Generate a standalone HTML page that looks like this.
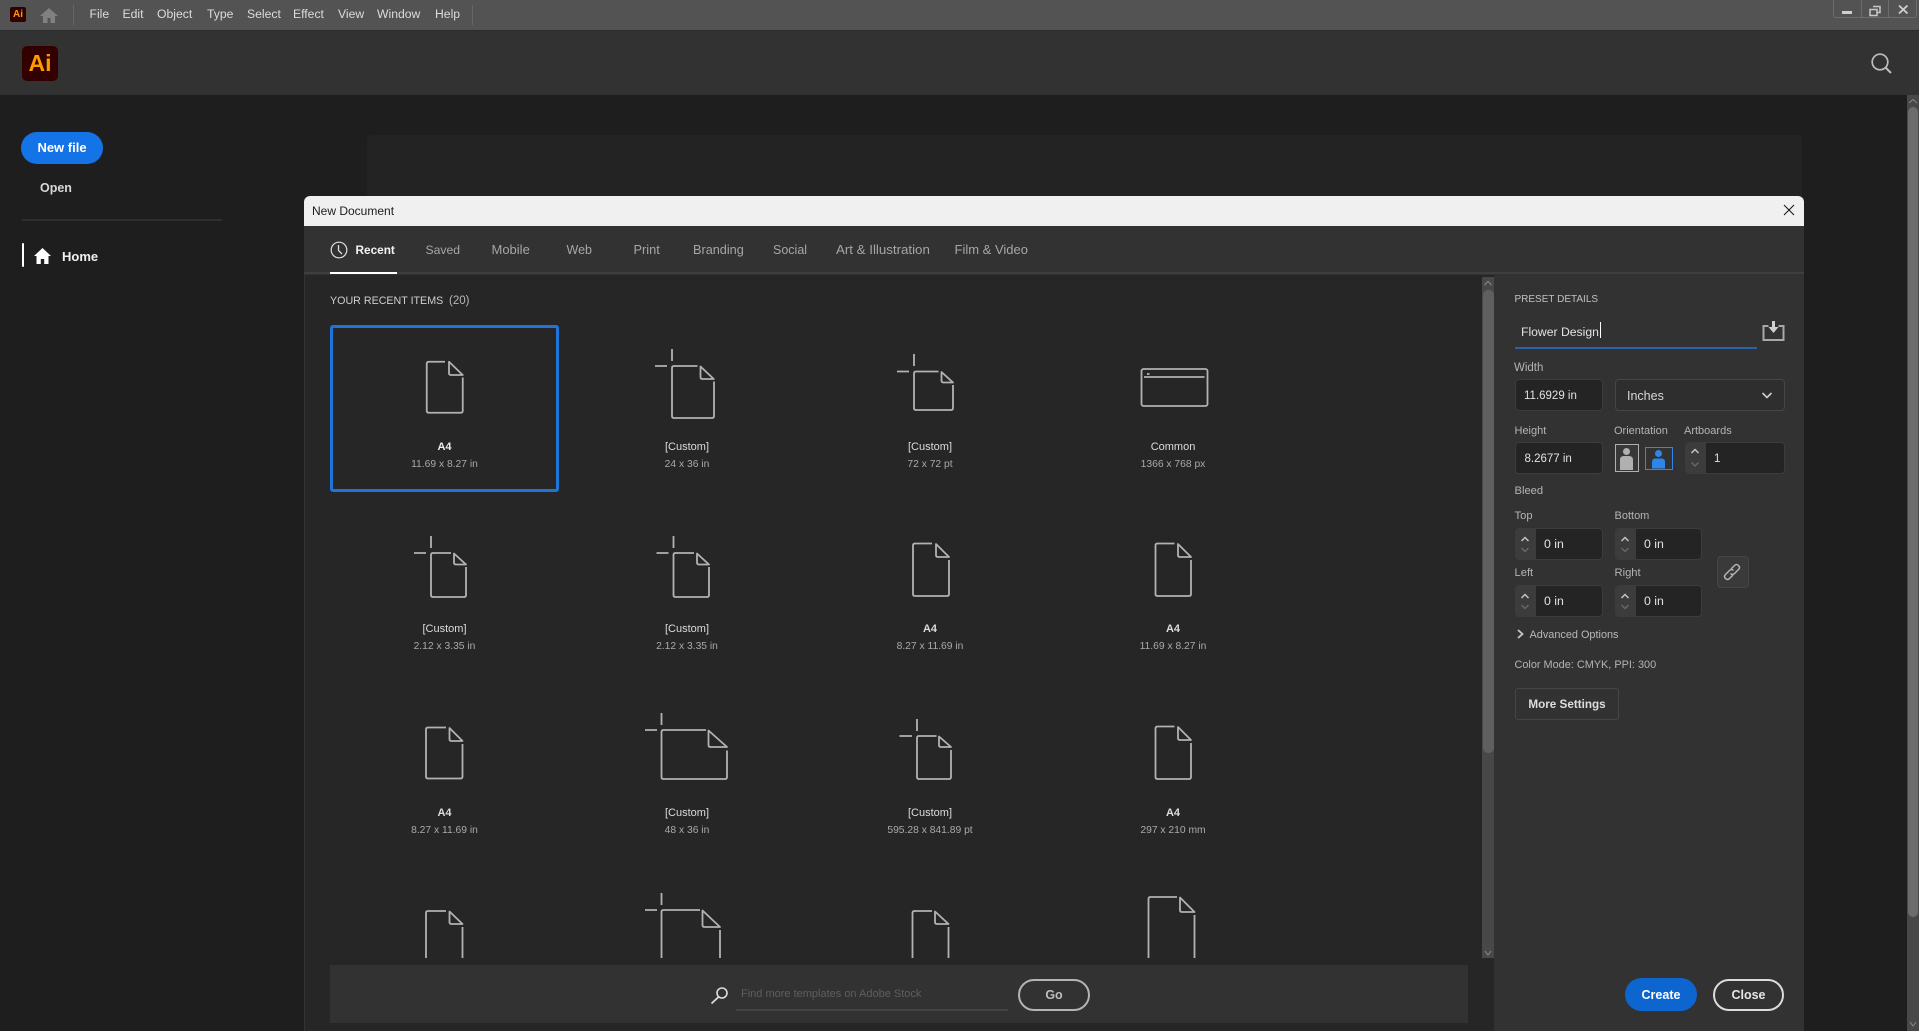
<!DOCTYPE html>
<html><head><meta charset="utf-8"><title>New Document</title>
<style>
html,body{margin:0;padding:0;width:1919px;height:1031px;overflow:hidden;background:#1e1e1e;font-family:"Liberation Sans",sans-serif}
div,span{position:absolute;box-sizing:border-box}
.t{white-space:nowrap;line-height:16px;height:16px;font-size:12px;color:#b4b4b4}
.c{width:240px;text-align:center}
.n{font-size:11px;color:#dcdcdc;margin-top:1px}
.s{font-size:10.3px;color:#aaa;margin-top:1px}
.m{font-size:12.2px;color:#dcdcdc}
.tab{font-size:12.5px;color:#a6a6a6;top:242px}
.in{background:#242424;border:1.5px solid #3c3c3c;border-radius:4px}
.st{background:#3c3c3c;left:0;top:0;bottom:0;width:20px;border-radius:3px 0 0 3px}
.v{font-size:11.5px;color:#e2e2e2}
svg{position:absolute;left:0;top:0}
</style></head><body>

<!-- top bar -->
<div style="left:0;top:0;width:1919px;height:30px;background:#535353"></div>
<div style="left:0;top:30px;width:1919px;height:1px;background:#2b2b2b"></div>
<div style="left:73px;top:5px;width:1px;height:20px;background:#666"></div>
<div style="left:472px;top:5px;width:1px;height:20px;background:#666"></div>
<div style="left:10px;top:7px;width:16px;height:15px;background:#330000;border-radius:2px"></div>
<div class="t" style="left:10px;top:7px;width:16px;text-align:center;font-size:10px;font-weight:bold;color:#ff9a00">Ai</div>
<div class="t m" style="left:89.5px;top:6px">File</div>
<div class="t m" style="left:122.5px;top:6px">Edit</div>
<div class="t m" style="left:157px;top:6px">Object</div>
<div class="t m" style="left:207px;top:6px">Type</div>
<div class="t m" style="left:247px;top:6px">Select</div>
<div class="t m" style="left:293px;top:6px">Effect</div>
<div class="t m" style="left:338px;top:6px">View</div>
<div class="t m" style="left:377px;top:6px">Window</div>
<div class="t m" style="left:435px;top:6px">Help</div>
<div style="left:1833px;top:-1px;width:84px;height:19px;border:1px solid #6c6c6c;border-radius:0 0 3px 3px"></div>
<div style="left:1861px;top:0;width:1px;height:18px;background:#6c6c6c"></div>
<div style="left:1888px;top:0;width:1px;height:18px;background:#6c6c6c"></div>

<!-- header -->
<div style="left:0;top:31px;width:1919px;height:64px;background:#323232"></div>
<div style="left:22px;top:46px;width:36px;height:35px;background:#330000;border-radius:5px"></div>
<div class="t" style="left:22px;top:46px;width:36px;height:35px;line-height:35px;text-align:center;font-size:23px;font-weight:bold;color:#ff9a00">Ai</div>

<!-- sidebar -->
<div style="left:21px;top:132px;width:82px;height:32px;border-radius:16px;background:#1473e6"></div>
<div class="t" style="left:21px;width:82px;text-align:center;top:140px;font-size:13px;font-weight:bold;color:#fff">New file</div>
<div class="t" style="left:40px;top:180px;font-size:12.5px;font-weight:bold;color:#d8d8d8">Open</div>
<div style="left:22px;top:219px;width:200px;height:2px;background:#2f2f2f"></div>
<div style="left:21.5px;top:243px;width:2px;height:24px;background:#fff;border-radius:1px"></div>
<div class="t" style="left:62px;top:249px;font-size:13px;font-weight:bold;color:#f0f0f0">Home</div>

<!-- background card -->
<div style="left:367px;top:135px;width:1435px;height:896px;background:#232323;border-radius:4px"></div>

<!-- main scrollbar -->
<div style="left:1907px;top:95px;width:12px;height:936px;background:#484848"></div>
<div style="left:1908px;top:107px;width:10px;height:810px;background:#6c6c6c;border-radius:5px"></div>

<!-- dialog -->
<div style="left:304px;top:196px;width:1500px;height:835px;background:#262626;border-radius:6px 6px 0 0;overflow:hidden">
  <div style="left:0;top:30px;width:1px;height:805px;background:#333"></div>
  <div style="left:0;top:0;width:1500px;height:30px;background:#f0f0f0"></div>
  <div style="left:0;top:30px;width:1500px;height:49px;background:#323232"></div>
  <div style="left:0;top:76px;width:1500px;height:2px;background:#3e3e3e"></div>
</div>
<div class="t" style="left:312px;top:203px;font-size:12px;color:#1d1d1d">New Document</div>
<div style="left:330px;top:272px;width:67px;height:2px;background:#fff"></div>

<!-- tabs -->
<div class="t tab" style="left:355.5px;color:#f2f2f2;font-weight:bold;font-size:11.8px">Recent</div>
<div class="t tab" style="left:425.5px;font-size:12.2px">Saved</div>
<div class="t tab" style="left:491.5px;font-size:13px">Mobile</div>
<div class="t tab" style="left:566.5px">Web</div>
<div class="t tab" style="left:633.5px;font-size:12.8px">Print</div>
<div class="t tab" style="left:693px;font-size:12.7px">Branding</div>
<div class="t tab" style="left:773px">Social</div>
<div class="t tab" style="left:836px;font-size:13.3px">Art &amp; Illustration</div>
<div class="t tab" style="left:954.5px;font-size:13px">Film &amp; Video</div>

<!-- right panel -->
<div style="left:1494px;top:274px;width:310px;height:757px;background:#323232"></div>
<!-- dialog scrollbar -->
<div style="left:1482px;top:277px;width:12px;height:681px;background:#484848"></div>
<div style="left:1483px;top:290px;width:11px;height:463px;background:#5f5f5f;border-radius:5px"></div>

<div class="t" style="left:330px;top:293px;font-size:10.7px;color:#cfcfcf">YOUR RECENT ITEMS</div>
<div class="t" style="left:449px;top:293px;font-size:11.5px;color:#b8b8b8">(20)</div>

<!-- selected card -->
<div style="left:330px;top:325px;width:228.5px;height:167px;border:3px solid #1f74d8;border-radius:3px"></div>

<!-- labels -->
<div class="t c n" style="left:324.5px;top:437.5px;font-weight:bold;color:#eee">A4</div><div class="t c s" style="left:324.5px;top:456px">11.69 x 8.27 in</div>
<div class="t c n" style="left:567px;top:437.5px">[Custom]</div><div class="t c s" style="left:567px;top:456px">24 x 36 in</div>
<div class="t c n" style="left:810px;top:437.5px">[Custom]</div><div class="t c s" style="left:810px;top:456px">72 x 72 pt</div>
<div class="t c n" style="left:1053px;top:437.5px">Common</div><div class="t c s" style="left:1053px;top:456px">1366 x 768 px</div>

<div class="t c n" style="left:324.5px;top:620px">[Custom]</div><div class="t c s" style="left:324.5px;top:638px">2.12 x 3.35 in</div>
<div class="t c n" style="left:567px;top:620px">[Custom]</div><div class="t c s" style="left:567px;top:638px">2.12 x 3.35 in</div>
<div class="t c n" style="left:810px;top:620px;font-weight:bold">A4</div><div class="t c s" style="left:810px;top:638px">8.27 x 11.69 in</div>
<div class="t c n" style="left:1053px;top:620px;font-weight:bold">A4</div><div class="t c s" style="left:1053px;top:638px">11.69 x 8.27 in</div>

<div class="t c n" style="left:324.5px;top:803.5px;font-weight:bold">A4</div><div class="t c s" style="left:324.5px;top:822px">8.27 x 11.69 in</div>
<div class="t c n" style="left:567px;top:803.5px">[Custom]</div><div class="t c s" style="left:567px;top:822px">48 x 36 in</div>
<div class="t c n" style="left:810px;top:803.5px">[Custom]</div><div class="t c s" style="left:810px;top:822px">595.28 x 841.89 pt</div>
<div class="t c n" style="left:1053px;top:803.5px;font-weight:bold">A4</div><div class="t c s" style="left:1053px;top:822px">297 x 210 mm</div>

<!-- bottom search bar -->
<div style="left:330px;top:965px;width:1138px;height:58px;background:#323232"></div>
<div class="t" style="left:741px;top:986px;font-size:11px;color:#5e5e5e">Find more templates on Adobe Stock</div>
<div style="left:736px;top:1009px;width:272px;height:1.5px;background:#444"></div>
<div style="left:1018px;top:979px;width:72px;height:32px;border:2px solid #b4b4b4;border-radius:16px"></div>
<div class="t" style="left:1018px;top:986.5px;width:72px;text-align:center;font-size:12.5px;font-weight:bold;color:#bdbdbd">Go</div>
<div style="left:1625px;top:978px;width:72px;height:33px;background:#0d66d0;border-radius:17px"></div>
<div class="t" style="left:1625px;top:986.5px;width:72px;text-align:center;font-size:12.5px;font-weight:bold;color:#fff">Create</div>
<div style="left:1713px;top:979px;width:71px;height:32px;border:2px solid #dcdcdc;border-radius:16px"></div>
<div class="t" style="left:1713px;top:986.5px;width:71px;text-align:center;font-size:12.5px;font-weight:bold;color:#e6e6e6">Close</div>

<!-- preset details -->
<div class="t" style="left:1514.5px;top:292px;font-size:10px;color:#c0c0c0">PRESET DETAILS</div>
<div class="t" style="left:1521px;top:323.5px;font-size:12.2px;color:#e2e2e2">Flower Design</div>
<div style="left:1600px;top:322px;width:1px;height:16px;background:#fff"></div>
<div style="left:1515px;top:347px;width:242px;height:1.5px;background:#2a62a8"></div>

<div class="t" style="left:1514px;top:359.5px;font-size:11.5px">Width</div>
<div class="in" style="left:1515px;top:379px;width:88px;height:32px"></div>
<div class="t v" style="left:1524px;top:388px">11.6929 in</div>
<div style="left:1615px;top:379px;width:170px;height:32px;border:1.5px solid #464646;border-radius:4px;background:#2e2e2e"></div>
<div class="t" style="left:1627px;top:388px;font-size:12.5px;color:#d8d8d8">Inches</div>

<div class="t" style="left:1514.5px;top:422.5px;font-size:11px">Height</div>
<div class="t" style="left:1614px;top:422.5px;font-size:11px">Orientation</div>
<div class="t" style="left:1684px;top:422.5px;font-size:11px">Artboards</div>
<div class="in" style="left:1515px;top:442px;width:88px;height:32px"></div>
<div class="t v" style="left:1524.5px;top:451px">8.2677 in</div>
<div style="left:1615px;top:444px;width:24px;height:28px;border:1.5px solid #b0b0b0;background:#383838"></div>
<div style="left:1645px;top:447px;width:28px;height:23px;border:1.5px solid #2e86e8"></div>
<div class="in" style="left:1685px;top:442px;width:100px;height:32px"><div class="st"></div></div>
<div class="t v" style="left:1714px;top:451px">1</div>

<div class="t" style="left:1514.5px;top:482.5px;font-size:11.2px">Bleed</div>
<div class="t" style="left:1514.5px;top:507.5px;font-size:11.2px">Top</div>
<div class="t" style="left:1614.5px;top:507.5px;font-size:11px">Bottom</div>
<div class="in" style="left:1515px;top:528px;width:88px;height:32px"><div class="st"></div></div>
<div class="in" style="left:1615px;top:528px;width:87px;height:32px"><div class="st"></div></div>
<div class="t v" style="left:1544px;top:536px;font-size:12.3px">0 in</div>
<div class="t v" style="left:1644px;top:536px;font-size:12.3px">0 in</div>
<div class="t" style="left:1514.5px;top:564.5px;font-size:11.2px">Left</div>
<div class="t" style="left:1614.5px;top:564.5px;font-size:11.2px">Right</div>
<div class="in" style="left:1515px;top:585px;width:88px;height:32px"><div class="st"></div></div>
<div class="in" style="left:1615px;top:585px;width:87px;height:32px"><div class="st"></div></div>
<div class="t v" style="left:1544px;top:593px;font-size:12.3px">0 in</div>
<div class="t v" style="left:1644px;top:593px;font-size:12.3px">0 in</div>
<div style="left:1716.5px;top:556px;width:32px;height:32px;background:#3a3a3a;border:1px solid #464646;border-radius:4px"></div>
<div class="t" style="left:1529.5px;top:626.5px;font-size:10.9px;color:#b8b8b8">Advanced Options</div>
<div class="t" style="left:1514.5px;top:656.5px;font-size:10.9px">Color Mode: CMYK, PPI: 300</div>
<div style="left:1515px;top:688px;width:104px;height:32px;border:1.5px solid #464646;border-radius:3px"></div>
<div class="t" style="left:1515px;top:696.5px;width:104px;text-align:center;font-size:11.7px;font-weight:bold;color:#dedede">More Settings</div>

<!-- all icons -->
<svg width="1919" height="1031" viewBox="0 0 1919 1031" fill="none">
 <!-- top home -->
 <path d="M49 8L40 16H43V23H47.5V18H50.5V23H55V16H58Z" fill="#808080"/>
 <!-- window controls -->
 <rect x="1842" y="11" width="10" height="3" fill="#cfcfcf"/>
 <path d="M1873 6.5H1880V12.5H1877M1870 9.5H1877V15.5H1870Z" stroke="#c8c8c8" stroke-width="1.5"/>
 <path d="M1899 5.5L1907.5 13.5M1907.5 5.5L1899 13.5" stroke="#cfcfcf" stroke-width="1.8"/>
 <!-- top search -->
 <circle cx="1880" cy="62" r="7.8" stroke="#bdbdbd" stroke-width="1.7"/>
 <path d="M1885.5 67.5L1891 73" stroke="#bdbdbd" stroke-width="2"/>
 <!-- scrollbar arrows -->
 <path d="M1909 103L1913 99.5L1917 103" stroke="#8a8a8a"/>
 <path d="M1910 1022L1913 1026L1916 1022" stroke="#8a8a8a"/>
 <path d="M1484.5 285L1488 281.5L1491.5 285" stroke="#8a8a8a"/>
 <path d="M1485 951L1488 955L1491 951" stroke="#8a8a8a"/>
 <!-- sidebar home -->
 <path d="M42.5 248L34 256H36.5V264H40.8V259H44.2V264H48.5V256H51Z" fill="#fff"/>
 <!-- dialog close -->
 <path d="M1784 205L1794 215M1794 205L1784 215" stroke="#1a1a1a" stroke-width="1.1"/>
 <!-- clock -->
 <circle cx="339" cy="250" r="7.8" stroke="#dedede" stroke-width="1.2"/>
 <path d="M338.5 245V250.5L342 254" stroke="#dedede" stroke-width="1.3"/>
 <!-- doc icons -->
 <g stroke="#b2b2b2" stroke-width="1.8" stroke-linejoin="round">
  <!-- row 1 -->
  <path d="M445 361.75H428.75Q426.75 361.75 426.75 363.75V410.75Q426.75 412.75 428.75 412.75H460.75Q462.75 412.75 462.75 410.75V377.5"/>
  <path d="M449 361.75L462.75 375H451Q449 375 449 373Z"/>

  <path d="M672 349V361M655 366H667"/>
  <path d="M697.5 366H674Q672 366 672 368V416Q672 418 674 418H712Q714 418 714 416V381.5"/>
  <path d="M700.5 366.5L713.75 379H702.5Q700.5 379 700.5 377Z"/>

  <path d="M914 354V366M897 371.5H909"/>
  <path d="M938.5 371.5H916Q914 371.5 914 373.5V408Q914 410 916 410H951Q953 410 953 408V385"/>
  <path d="M941.5 372L953 382.5H943.5Q941.5 382.5 941.5 380.5Z"/>

  <rect x="1141.5" y="369" width="66" height="37" rx="2"/>
  <path d="M1144 377H1204.5"/>
  <path d="M1147 374H1149.5"/>

  <!-- row 2 -->
  <path d="M431 536V548M414 553H426"/>
  <path d="M451 553H433Q431 553 431 555V595Q431 597 433 597H464Q466 597 466 595V567"/>
  <path d="M454 553.5L466 564.5H456Q454 564.5 454 562.5Z"/>

  <path d="M673.5 536V548M656.5 553H668.5"/>
  <path d="M694 553H675.5Q673.5 553 673.5 555V595Q673.5 597 675.5 597H707Q709 597 709 595V567"/>
  <path d="M697 553.5L709 564.5H699Q697 564.5 697 562.5Z"/>

  <path d="M932 543.5H915Q913 543.5 913 545.5V594Q913 596 915 596H947Q949 596 949 594V560"/>
  <path d="M936 544L949 557H938Q936 557 936 555Z"/>

  <path d="M1174.5 543.5H1157.5Q1155.5 543.5 1155.5 545.5V594Q1155.5 596 1157.5 596H1189Q1191 596 1191 594V560"/>
  <path d="M1178 544L1191 557H1180Q1178 557 1178 555Z"/>

  <!-- row 3 -->
  <path d="M446 727.5H428Q426 727.5 426 729.5V776.5Q426 778.5 428 778.5H460.5Q462.5 778.5 462.5 776.5V744"/>
  <path d="M449.5 728L462.5 741H451.5Q449.5 741 449.5 739Z"/>

  <path d="M661.5 713V725M645 730H657"/>
  <path d="M706 730H663.5Q661.5 730 661.5 732V777Q661.5 779 663.5 779H725Q727 779 727 777V750.5"/>
  <path d="M708.5 730.5L727 747H710.5Q708.5 747 708.5 745Z"/>

  <path d="M917 719V731M899.5 736H912"/>
  <path d="M936.5 736H919Q917 736 917 738V777Q917 779 919 779H949Q951 779 951 777V750"/>
  <path d="M939 736.5L951 747H941Q939 747 939 745Z"/>

  <path d="M1174.5 726.5H1157.5Q1155.5 726.5 1155.5 728.5V777Q1155.5 779 1157.5 779H1189Q1191 779 1191 777V743"/>
  <path d="M1178 727L1191 740H1180Q1178 740 1178 738Z"/>

  <!-- row 4 -->
  <path d="M446 911H428Q426 911 426 913V958M462.5 927V958"/>
  <path d="M449.5 911.5L462.5 924H451.5Q449.5 924 449.5 922Z"/>

  <path d="M661.5 893V905M645 910H657"/>
  <path d="M700 910H663.5Q661.5 910 661.5 912V958M720 930V958"/>
  <path d="M702.5 910.5L720 927H704.5Q702.5 927 702.5 925Z"/>

  <path d="M932 911H914.5Q912.5 911 912.5 913V958M948.5 927V958"/>
  <path d="M935 911.5L948.5 924H937Q935 924 935 922Z"/>

  <path d="M1177 897H1150.5Q1148.5 897 1148.5 899V958M1194.5 915V958"/>
  <path d="M1180 897.5L1194.5 912H1182Q1180 912 1180 910Z"/>
 </g>
 <!-- bottom search -->
 <circle cx="722" cy="993" r="5" stroke="#dcdcdc" stroke-width="1.6"/>
 <path d="M718.5 997L711.5 1003.5" stroke="#dcdcdc" stroke-width="1.8"/>
 <!-- save preset -->
 <path d="M1768.5 326H1763.5V340H1783.5V326H1778.5" stroke="#a8a8a8" stroke-width="2"/>
 <path d="M1772 321H1775V327H1778.5L1773.5 333L1768.5 327H1772Z" fill="#cfcfcf"/>
 <!-- select chevron -->
 <path d="M1762.5 393L1767 397.5L1771.5 393" stroke="#cfcfcf" stroke-width="1.6"/>
 <!-- orientation figures -->
 <circle cx="1626.5" cy="451.5" r="3.5" fill="#b0b0b0"/>
 <path d="M1620 470V460Q1620 456 1624 456H1629Q1633 456 1633 460V470Z" fill="#b0b0b0"/>
 <circle cx="1658.5" cy="453.5" r="3.5" fill="#2e86e8"/>
 <path d="M1652 468.5V462Q1652 458.5 1655.5 458.5H1661.5Q1665 458.5 1665 462V468.5Z" fill="#2e86e8"/>
 <!-- steppers -->
 <g stroke-width="1.5">
  <path d="M1691.5 453L1695 449.5L1698.5 453" stroke="#c4c4c4"/>
  <path d="M1691.5 462.5L1695 466L1698.5 462.5" stroke="#666"/>
  <path d="M1521.5 541L1525 537.5L1528.5 541" stroke="#c4c4c4"/>
  <path d="M1521.5 548L1525 551.5L1528.5 548" stroke="#666"/>
  <path d="M1621.5 541L1625 537.5L1628.5 541" stroke="#c4c4c4"/>
  <path d="M1621.5 548L1625 551.5L1628.5 548" stroke="#666"/>
  <path d="M1521.5 598L1525 594.5L1528.5 598" stroke="#c4c4c4"/>
  <path d="M1521.5 605L1525 608.5L1528.5 605" stroke="#666"/>
  <path d="M1621.5 598L1625 594.5L1628.5 598" stroke="#c4c4c4"/>
  <path d="M1621.5 605L1625 608.5L1628.5 605" stroke="#666"/>
 </g>
 <!-- link icon -->
 <path d="M1731 569L1734.5 565.5Q1736.5 563.5 1738.5 565.5Q1740.5 567.5 1738.5 569.5L1734.5 573.5Q1732.5 575.5 1730.5 573.5" stroke="#b4b4b4" stroke-width="1.5"/>
 <path d="M1733 575L1729.5 578.5Q1727.5 580.5 1725.5 578.5Q1723.5 576.5 1725.5 574.5L1729.5 570.5Q1731.5 568.5 1733.5 570.5" stroke="#b4b4b4" stroke-width="1.5"/>
 <!-- advanced chevron -->
 <path d="M1518 630L1522.5 634L1518 638" stroke="#c8c8c8" stroke-width="1.8"/>
</svg>
</body></html>
